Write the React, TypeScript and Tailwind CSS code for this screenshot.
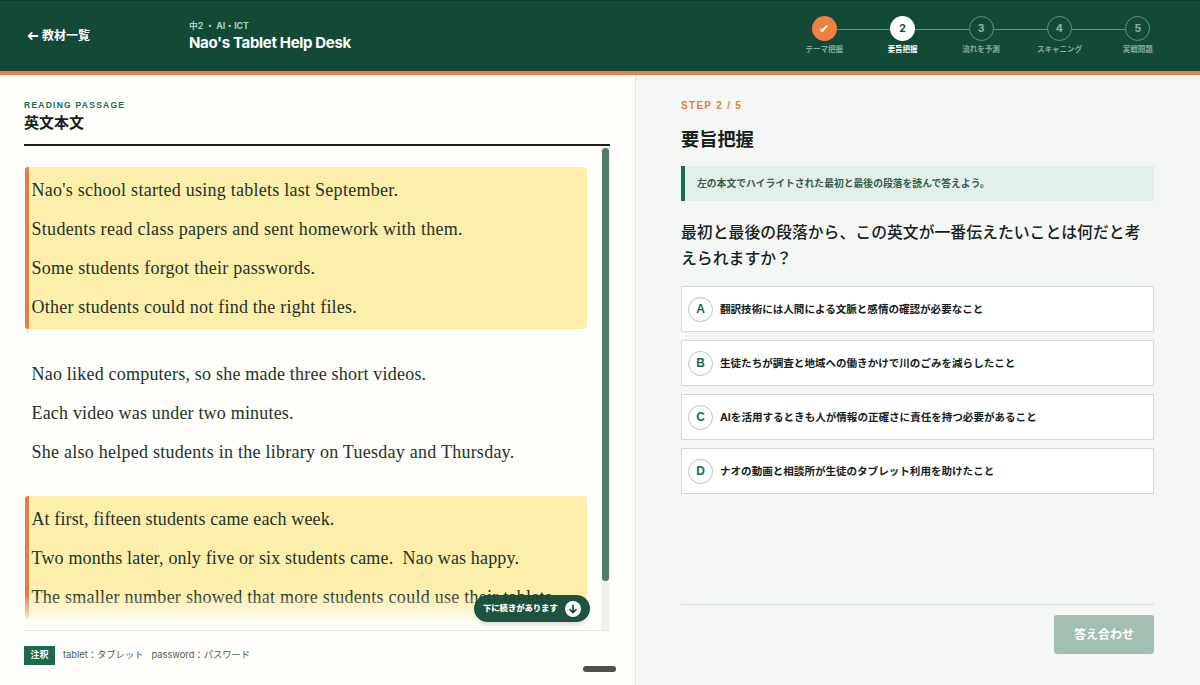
import { useState } from 'react';
import { clsx } from 'clsx';

const steps = ['テーマ把握', '要旨把握', '流れを予測', 'スキャニング', '実戦問題'];

const passage = [
    {
        highlight: true,
        lines: [
            { text: "Nao's school started using tablets last September.", spacing: 'tracking-[0.26px]' },
            { text: 'Students read class papers and sent homework with them.', spacing: 'tracking-[0.29px]' },
            { text: 'Some students forgot their passwords.', spacing: 'tracking-[0.26px]' },
            { text: 'Other students could not find the right files.', spacing: 'tracking-[0.23px]' },
        ],
    },
    {
        highlight: false,
        lines: [
            { text: 'Nao liked computers, so she made three short videos.', spacing: 'tracking-[0.21px]' },
            { text: 'Each video was under two minutes.', spacing: 'tracking-[0.19px]' },
            { text: 'She also helped students in the library on Tuesday and Thursday.', spacing: 'tracking-[0.25px]' },
        ],
    },
    {
        highlight: true,
        lines: [
            { text: 'At first, fifteen students came each week.', spacing: 'tracking-[0.12px]' },
            { text: 'Two months later, only five or six students came.  Nao was happy.', spacing: 'tracking-[0.16px]' },
            { text: 'The smaller number showed that more students could use their tablets.', spacing: 'tracking-[0.26px]' },
        ],
    },
];

const choices = [
    { key: 'A', text: '翻訳技術には人間による文脈と感情の確認が必要なこと' },
    { key: 'B', text: '生徒たちが調査と地域への働きかけで川のごみを減らしたこと' },
    { key: 'C', text: 'AIを活用するときも人が情報の正確さに責任を持つ必要があること' },
    { key: 'D', text: 'ナオの動画と相談所が生徒のタブレット利用を助けたこと' },
];

const Header = () => (
    <header className="flex h-[75px] shrink-0 items-start border-t border-b-4 border-t-[#07382a] border-b-[#e88148] bg-[#134a37] text-white">
        <button className="mt-[25px] ml-[27px] flex h-5 w-[162px] items-center gap-[3px] text-[12px] font-bold">
            <svg width="12" height="12" viewBox="0 0 12 12" fill="none" stroke="currentColor" strokeWidth="1.8" strokeLinecap="round" strokeLinejoin="round">
                <path d="M10.5 6H1.7M4.8 2.9L1.7 6L4.8 9.1" />
            </svg>
            教材一覧
        </button>
        <div className="mt-[18px] whitespace-nowrap">
            <p className="h-[14px] text-[8.8px] leading-[13px] font-bold text-[#a5d5bf]">中2 ・ AI・ICT</p>
            <h1 className="h-5 text-[15px] leading-5 font-bold tracking-[-0.33px]">Nao's Tablet Help Desk</h1>
        </div>
        <ol className="mt-[15px] mr-[23px] ml-auto flex">
            {steps.map((label, i) => (
                <li key={label} className="flex w-[78.4px] flex-col items-center">
                    <div className="flex w-full items-center">
                        <span className={clsx('mt-0.5 h-px flex-1', i > 0 && 'bg-[#6a9083]')} />
                        <span
                            className={clsx(
                                'flex size-[25px] items-center justify-center rounded-full text-[10.5px] font-bold',
                                i === 0 && 'bg-[#f08040] text-white',
                                i === 1 && 'bg-white text-[#134a37]',
                                i > 1 && 'border-[1.5px] border-[#6a9083] text-[#91b0a4]'
                            )}
                        >
                            {i === 0 ? <span className="font-['DejaVu_Sans'] text-[12px]">✔</span> : i + 1}
                        </span>
                        <span className={clsx('mt-0.5 h-px flex-1', i < 4 && 'bg-[#6a9083]')} />
                    </div>
                    <span className={clsx('mt-0.5 text-[7.5px] leading-[13px] font-bold whitespace-nowrap', i === 1 ? 'text-white' : 'text-[#8aaa9e]')}>
                        {label}
                    </span>
                </li>
            ))}
        </ol>
    </header>
);

const Passage = () => (
    <section className="relative flex w-[636px] shrink-0 flex-col border-r border-[#dfe5e2] bg-[#fffefa] pr-[25px] pl-6">
        <div className="h-[71px] shrink-0 border-b-2 border-[#17231e] pt-[25px]">
            <p className="h-[11px] font-['Liberation_Sans'] text-[8.5px] leading-[11px] font-bold tracking-[1.25px] text-[#1a6a4c]">READING PASSAGE</p>
            <h2 className="text-[15px] leading-[23px] font-bold text-[#15211c]">英文本文</h2>
        </div>

        <div className="flex h-[484px] shrink-0">
            <div className="relative h-[474px] w-[563px] overflow-hidden pt-[20.5px] pl-px">
                {passage.map((para, i) => (
                    <div
                        key={i}
                        className={clsx(
                            'mb-[21.5px] rounded-[3px] border-l-4 py-[3px] pl-[2.5px]',
                            para.highlight ? 'border-[#e57c43] bg-[#feeeac]' : 'border-transparent'
                        )}
                    >
                        {para.lines.map((line) => (
                            <p key={line.text} className={clsx("h-[39.2px] font-['Liberation_Serif'] text-[18px] leading-[40px] whitespace-pre text-[#1c3328]", line.spacing)}>
                                {line.text}
                            </p>
                        ))}
                    </div>
                ))}
                <div className="absolute inset-x-0 bottom-0 h-[26px] bg-linear-to-b from-[#fffefa]/0 to-[#fffefa]/85" />
            </div>
            <div className="ml-auto w-[9px] bg-[#f0f2f0] pt-0.5 pr-px pl-px">
                <div className="h-[433px] rounded-full bg-[#507c68]" />
            </div>
        </div>

        <div className="flex h-[49px] items-center border-t border-[#dfe5e2] text-[9.3px] text-[#4c5d55]">
            <span className="flex h-[19px] w-[31px] items-center justify-center bg-[#1a6a4c] text-[9px] font-bold text-white">注釈</span>
            <span className="ml-2">tablet：タブレット</span>
            <span className="ml-2">password：パスワード</span>
        </div>

        <button className="absolute top-[520px] left-[474px] flex h-[27px] w-[116px] items-center justify-between rounded-full bg-[#134a37]/95 pr-[9px] pl-[9px] text-[8.3px] font-black whitespace-nowrap text-white shadow-md">
            下に続きがあります
            <span className="flex size-4 items-center justify-center rounded-full bg-white text-[#134a37]">
                <svg width="10" height="10" viewBox="0 0 10 10" fill="none" stroke="currentColor" strokeWidth="1.6" strokeLinecap="round" strokeLinejoin="round">
                    <path d="M5 1.2V8.5M2 5.6L5 8.6L8 5.6" />
                </svg>
            </span>
        </button>
        <div className="absolute top-[591px] left-[583px] h-1.5 w-[33px] rounded-full bg-[#505050]" />
    </section>
);

const Question = () => {
    const [selected, setSelected] = useState('');

    return (
        <section className="flex-1 bg-[#f4f7f4] pr-[46px] pl-[45px] text-[#15211c]">
            <p className="mt-6 font-['Liberation_Sans'] text-[10px] leading-[14px] font-bold tracking-[1.3px] text-[#e57c43]">STEP 2 / 5</p>
            <h2 className="mt-3 h-[30px] text-[18.2px] leading-[28px] font-bold">要旨把握</h2>
            <p className="mt-[11px] flex h-[35px] items-center border-l-4 border-[#1a6a4c] bg-[#e3f0e9] pt-px pl-3 text-[9.8px] font-bold text-[#3b5b4d]">
                左の本文でハイライトされた最初と最後の段落を読んで答えよう。
            </p>
            <p className="mt-[19px] text-[15.85px] leading-[26px] font-medium">最初と最後の段落から、この英文が一番伝えたいことは何だと考えられますか？</p>

            <div className="mt-3.5 flex flex-col gap-2">
                {choices.map(({ key, text }) => (
                    <button
                        key={key}
                        onClick={() => setSelected(key)}
                        className={clsx(
                            'flex h-[46px] items-center gap-[7px] border bg-white pl-1.5 text-[10.55px] font-bold',
                            selected === key ? 'border-[#1a6a4c]' : 'border-[#d3dad6]'
                        )}
                    >
                        <span className="flex size-[25px] items-center justify-center rounded-full border border-[#b9c4be] font-['Liberation_Sans'] text-[12px] font-bold text-[#1a6a4c]">{key}</span>
                        <span className="pt-0.5">{text}</span>
                    </button>
                ))}
            </div>

            <div className="mt-[110px] flex justify-end border-t border-[#d8dfdb] pt-2.5">
                <button disabled={!selected} className="h-[39px] w-[100px] rounded-[3px] bg-[#1a6a4c] text-[12px] font-bold text-white disabled:bg-[#a3bfb1]">
                    答え合わせ
                </button>
            </div>
        </section>
    );
};

const App = () => {
    return (
        <div className="flex h-[685px] w-[1200px] flex-col overflow-hidden font-[Inter,'Noto_Sans_CJK_JP',sans-serif]">
            <Header />
            <main className="flex min-h-0 flex-1">
                <Passage />
                <Question />
            </main>
        </div>
    );
};

export default App;
